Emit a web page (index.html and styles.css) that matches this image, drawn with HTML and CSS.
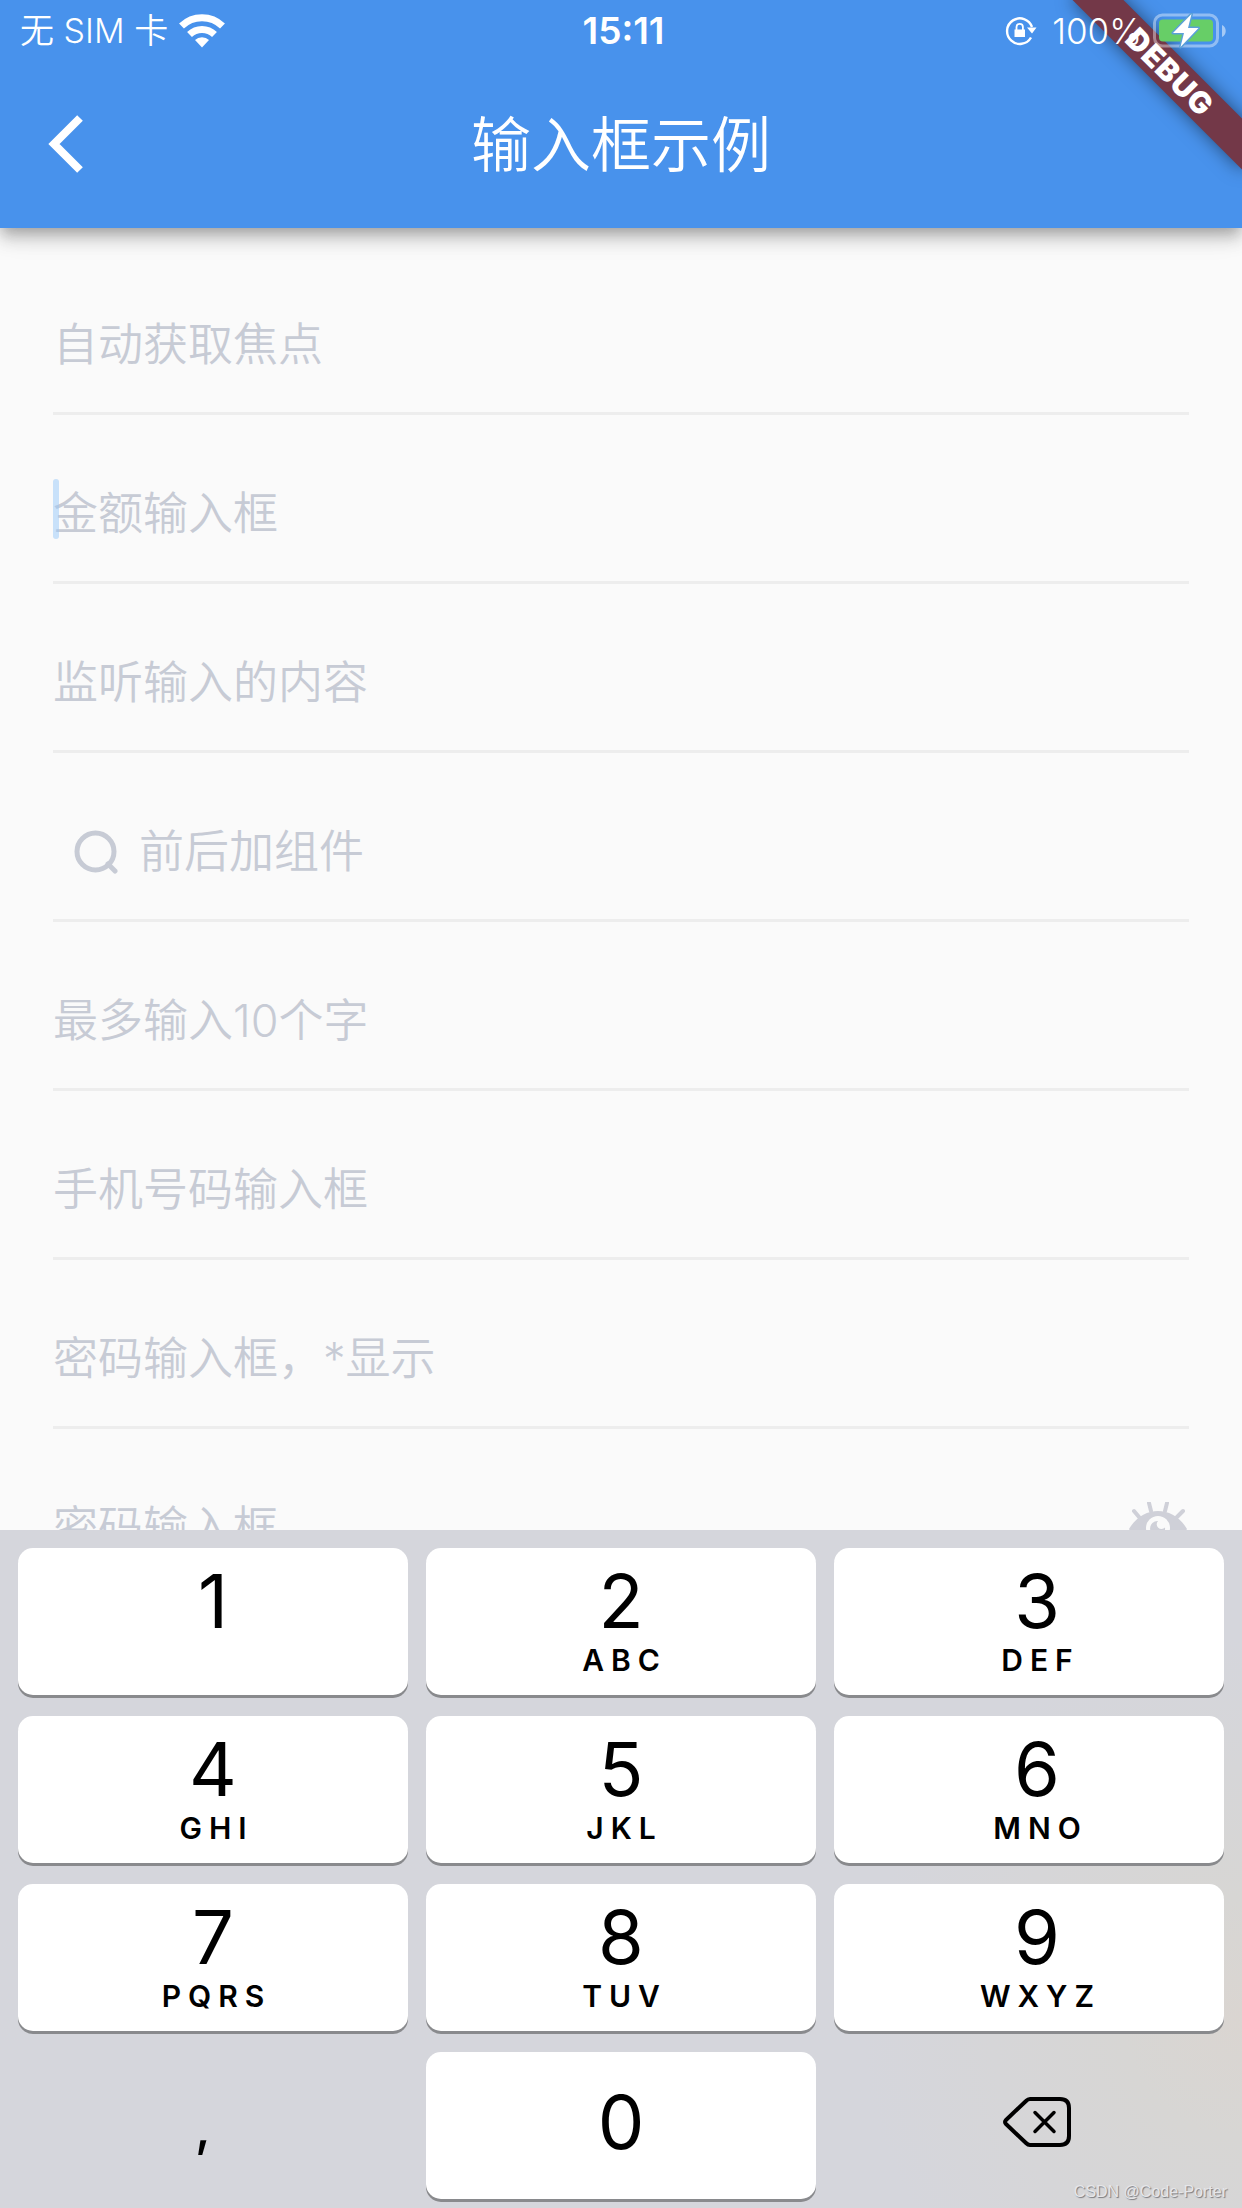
FILE: index.html
```html
<!DOCTYPE html>
<html lang="zh-CN">
<head>
<meta charset="utf-8">
<meta name="viewport" content="width=device-width, initial-scale=1">
<title>输入框示例</title>
<link rel="stylesheet" href="styles.css">
</head>
<body>
<div class="app">
  <header class="header">
    <div class="debug-banner">DEBUG</div>
    <div class="status">
      <div class="status-side status-left">
        <span>无 SIM 卡</span>
        <svg class="wifi" viewBox="0 0 46 34" aria-hidden="true">
          <path fill="#fff" d="M23 33.500l-7-7.500a10 10 0 0 1 14 0z"/>
          <path fill="none" stroke="#fff" stroke-width="7" d="M10.500 20.500a18 18 0 0 1 25 0"/>
          <path fill="none" stroke="#fff" stroke-width="7" d="M2.500 12a29.500 29.500 0 0 1 41 0"/>
        </svg>
      </div>
      <time class="clock">15:11</time>
      <div class="status-side status-right">
        <svg class="lock" viewBox="0 0 32 30" aria-hidden="true">
          <path fill="none" stroke="#fff" stroke-width="2.400" d="M26 21.500A12.800 12.800 0 1 1 27 11"/>
          <path fill="#fff" d="M22 11.500h9.500l-4.500 6zM9.500 13.500h10.500v7.500h-10.500z"/>
          <path fill="none" stroke="#fff" stroke-width="1.800" d="M11.500 14v-3a3.200 3.200 0 0 1 6.400 0v3"/>
        </svg>
        <span>100%</span>
        <svg class="battery" viewBox="0 0 74 36" aria-hidden="true">
          <rect x="1.500" y="2" width="63" height="31" rx="8" fill="none" stroke="#fff" stroke-opacity=".4" stroke-width="3"/>
          <path d="M69 12c5 2 5 10 0 12z" fill="#fff" fill-opacity=".5"/>
          <rect x="6" y="6.500" width="54" height="22" rx="4" fill="#67ce67"/>
          <path d="M38.500 1L20 20h11l-3.500 14L45.500 15H35z" fill="#fff" stroke="#5aa0d8" stroke-width="3" paint-order="stroke" stroke-linejoin="round"/>
        </svg>
      </div>
    </div>
    <div class="nav">
      <button class="back" type="button" aria-label="返回">
        <svg viewBox="0 0 36 60" aria-hidden="true"><path d="M32 4L6 30l26 26" fill="none" stroke="#fff" stroke-width="8"/></svg>
      </button>
      <h1 class="title">输入框示例</h1>
    </div>
  </header>

  <form class="form">
    <div class="field"><input type="text" placeholder="自动获取焦点" aria-label="自动获取焦点"></div>
    <div class="field"><input type="text" inputmode="decimal" placeholder="金额输入框" aria-label="金额输入框"><span class="caret"></span></div>
    <div class="field"><input type="text" placeholder="监听输入的内容" aria-label="监听输入的内容"></div>
    <div class="field">
      <svg class="search" viewBox="0 0 44 44" aria-hidden="true"><g fill="none" stroke="#c7cbd5" stroke-width="5"><circle cx="21.500" cy="21.500" r="18.500"/><path d="M34 34l7 7" stroke-linecap="round"/></g></svg>
      <input type="text" placeholder="前后加组件" aria-label="前后加组件">
    </div>
    <div class="field"><input type="text" maxlength="10" placeholder="最多输入10个字" aria-label="最多输入10个字"></div>
    <div class="field"><input type="tel" placeholder="手机号码输入框" aria-label="手机号码输入框"></div>
    <div class="field"><input type="password" placeholder="密码输入框，*显示" aria-label="密码输入框，*显示"></div>
    <div class="field">
      <input type="password" placeholder="密码输入框" aria-label="密码输入框">
      <button class="reveal" type="button" aria-label="显示密码">
        <svg viewBox="0 0 60 52" aria-hidden="true">
          <path fill="#cfd0d8" d="M0 27C14 3 44 3 58 27 44 50 14 50 0 27z"/>
          <path fill="none" stroke="#cfd0d8" stroke-width="4" stroke-linecap="round" d="M10 15l-5-6M22 9l-2-8M36 9l2-8M48 15l6-6"/>
          <circle cx="29" cy="26" r="12" fill="#fafafa"/>
          <path fill="#cfd0d8" d="M29 19a4.500 4.500 0 0 0 7 6.500A7.500 7.500 0 1 1 29 19z"/>
        </svg>
      </button>
    </div>
  </form>

  <div class="keyboard">
    <button class="key" type="button"><b>1</b><i></i></button>
    <button class="key" type="button"><b>2</b><i>ABC</i></button>
    <button class="key key-end" type="button"><b>3</b><i>DEF</i></button>
    <button class="key" type="button"><b>4</b><i>GHI</i></button>
    <button class="key" type="button"><b>5</b><i>JKL</i></button>
    <button class="key key-end" type="button"><b>6</b><i>MNO</i></button>
    <button class="key" type="button"><b>7</b><i>PQRS</i></button>
    <button class="key" type="button"><b>8</b><i>TUV</i></button>
    <button class="key key-end" type="button"><b>9</b><i>WXYZ</i></button>
    <button class="key key-plain key-comma" type="button"><b>,</b></button>
    <button class="key key-zero" type="button"><b>0</b></button>
    <button class="key key-plain key-end" type="button" aria-label="删除">
      <svg class="delete" viewBox="0 0 68 50" aria-hidden="true"><g fill="none" stroke="#000" stroke-width="4" stroke-linecap="round" stroke-linejoin="round"><path d="M27 2h30q9 0 9 9v28q0 9-9 9H27q-2 0-4-2L3 27q-2-2 0-4L23 4q2-2 4-2z"/><path d="M32 15.500l19 19M51 15.500l-19 19" stroke-width="3.500"/></g></svg>
    </button>
    <span class="watermark">CSDN @Code-Porter</span>
  </div>
</div>
</body>
</html>
```
FILE: styles.css
```css
* {
  box-sizing: border-box;
}

body {
  margin: 0;
  background: #fafafa;
  font-family: Inter, "Noto Sans CJK SC", sans-serif;
}

button {
  border: 0;
  padding: 0;
  background: none;
  color: inherit;
  font: inherit;
}

svg {
  display: block;
}

.app {
  display: flex;
  flex-direction: column;
  height: 100vh;
  overflow: hidden;
}

/* Header: system status bar and navigation bar */
.header {
  position: relative;
  z-index: 1;
  flex: none;
  background: #4892ec;
  color: #fff;
  box-shadow: 0 6px 12px -3px rgba(0, 0, 0, .2), 0 12px 15px rgba(0, 0, 0, .14), 0 3px 30px rgba(0, 0, 0, .12);
  clip-path: inset(0 0 -60px 0);
}

.status {
  position: relative;
  display: flex;
  align-items: center;
  height: 60px;
  padding: 2px 15px 0;
  font-size: 34px;
  font-weight: 350;
  line-height: 40px;
}

.status-side {
  display: flex;
  flex: 1 1 0;
  align-items: center;
  gap: 11px;
}

.status-left {
  padding-left: 5px;
}

.status-right {
  justify-content: flex-end;
  font-size: 35px;
}

.clock {
  font-size: 37px;
  font-weight: 600;
}

.wifi {
  width: 46px;
  height: 34px;
}

.lock {
  width: 32px;
  height: 30px;
  margin-right: 4px;
}

.battery {
  width: 74px;
  height: 36px;
}

.debug-banner {
  position: absolute;
  top: 54px;
  right: -48px;
  width: 240px;
  height: 36px;
  background: #733848;
  box-shadow: 0 0 18px rgba(0, 0, 0, .5);
  font-size: 30px;
  font-weight: 900;
  letter-spacing: 1px;
  line-height: 36px;
  text-align: center;
  transform: rotate(45deg);
}

.nav {
  display: grid;
  grid-template-columns: 120px 1fr 120px;
  align-items: center;
  height: 168px;
}

.back {
  padding-left: 48px;
}

.back svg {
  width: 36px;
  height: 60px;
}

.title {
  margin: 0;
  padding-top: 2px;
  font-size: 60px;
  font-weight: 350;
  line-height: 80px;
  text-align: center;
}

/* Form */
.form {
  flex: 1;
  min-height: 0;
  padding: 18px 53px 0;
  overflow: hidden;
}

.field {
  position: relative;
  display: flex;
  align-items: center;
  height: 169px;
  padding-top: 32px;
  border-bottom: 3px solid #ededed;
}

.field input {
  flex: 1;
  min-width: 0;
  height: 72px;
  border: 0;
  padding: 0;
  outline: 0;
  background: none;
  color: #333;
  font: 350 45px/72px Inter, "Noto Sans CJK SC", sans-serif;
}

.field input::placeholder {
  color: #c7cbd5;
  opacity: 1;
}

.caret {
  position: absolute;
  top: 64px;
  left: 0;
  width: 6px;
  height: 60px;
  border-radius: 3px;
  background: rgba(150, 200, 250, .5);
}

.search {
  width: 44px;
  height: 44px;
  margin: 0 21px;
}

.reveal svg {
  width: 60px;
  height: 52px;
}

/* Numeric keyboard */
.keyboard {
  position: relative;
  display: grid;
  flex: none;
  grid-template-columns: repeat(3, 1fr);
  grid-auto-rows: 147px;
  gap: 21px 18px;
  padding: 18px 18px 9px;
  background: radial-gradient(circle at 100% 72%, #dad5d1, #d7d6d4 120px, #d5d6dc 380px);
  color: #000;
}

.key {
  display: flex;
  flex-direction: column;
  align-items: center;
  padding-top: 16px;
  border-radius: 15px;
  background: #fff;
  box-shadow: 0 3px 0 #898a8d;
}

.key-end {
  padding-left: 16px;
}

.key b {
  font-size: 74px;
  font-weight: 400;
  line-height: 74px;
}

.key i {
  height: 36px;
  margin-top: 4px;
  padding-left: 7px;
  font-size: 30px;
  font-style: normal;
  font-weight: 600;
  letter-spacing: 7px;
  line-height: 36px;
}

.key-zero,
.key-plain {
  justify-content: center;
  padding-top: 0;
  padding-bottom: 8px;
}

.key-plain {
  background: none;
  box-shadow: none;
}

.key-comma {
  padding-top: 4px;
  padding-right: 20px;
  padding-bottom: 0;
}

.key-comma b {
  font-size: 52px;
  font-weight: 500;
}

.delete {
  width: 68px;
  height: 50px;
}

.watermark {
  position: absolute;
  right: 15px;
  bottom: 6px;
  color: #e6e6e9;
  font: 16px/20px "Liberation Sans", sans-serif;
  text-shadow: 1px 1px 1px #77787c;
}
```
